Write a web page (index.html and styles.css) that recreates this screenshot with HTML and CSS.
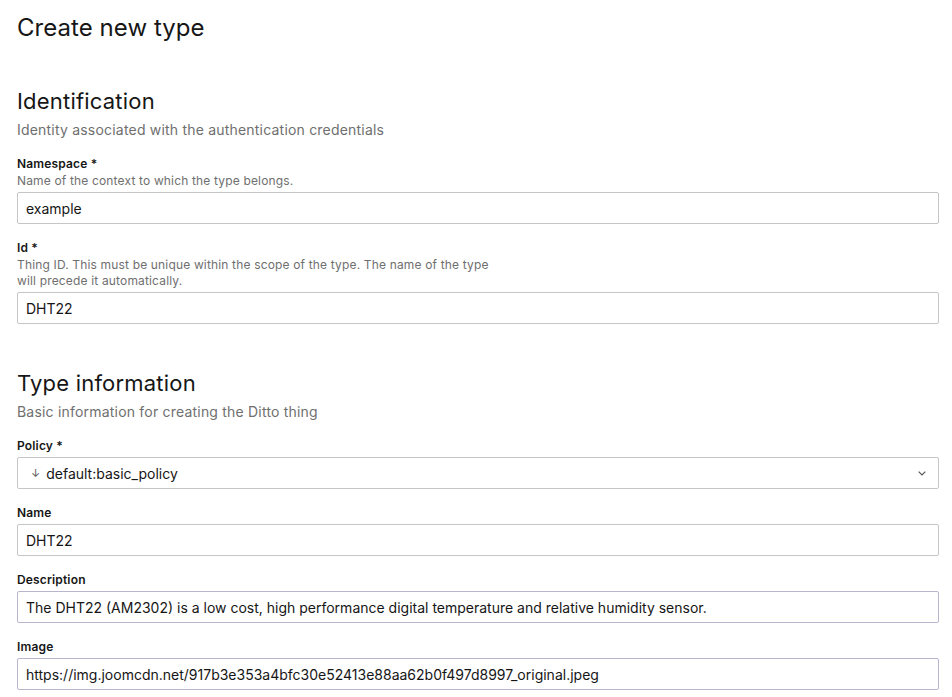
FILE: index.html
```html
<!DOCTYPE html>
<html lang="en">
<head>
<meta charset="utf-8">
<title>Create new type</title>
<link rel="stylesheet" href="styles.css">
</head>
<body>
<main class="page">
  <h1 class="page-title">Create new type</h1>

  <section class="section">
    <h2 class="section-title">Identification</h2>
    <p class="section-desc">Identity associated with the authentication credentials</p>

    <div class="field">
      <label class="label">Namespace *</label>
      <div class="helper">Name of the context to which the type belongs.</div>
      <div class="input">example</div>
    </div>

    <div class="field">
      <label class="label">Id *</label>
      <div class="helper">Thing ID. This must be unique within the scope of the type. The name of the type will precede it automatically.</div>
      <div class="input">DHT22</div>
    </div>
  </section>

  <section class="section">
    <h2 class="section-title">Type information</h2>
    <p class="section-desc">Basic information for creating the Ditto thing</p>

    <div class="field">
      <label class="label">Policy *</label>
      <div class="input select">
        <span class="sel-arrow">↓</span>
        <span class="sel-value">default:basic_policy</span>
        <svg class="chevron" width="8" height="5" viewBox="0 0 8 5"><path d="M0.7 0.7l3.3 3.3 3.3-3.3" fill="none" stroke="#555" stroke-width="1.2"/></svg>
      </div>
    </div>

    <div class="field">
      <label class="label">Name</label>
      <div class="input">DHT22</div>
    </div>

    <div class="field">
      <label class="label">Description</label>
      <div class="input alt">The DHT22 (AM2302) is a low cost, high performance digital temperature and relative humidity sensor.</div>
    </div>

    <div class="field">
      <label class="label">Image</label>
      <div class="input alt">https://img.joomcdn.net/917b3e353a4bfc30e52413e88aa62b0f497d8997_original.jpeg</div>
    </div>
  </section>
</main>
</body>
</html>
```
FILE: styles.css
```css
* { box-sizing: border-box; }
html, body { margin: 0; padding: 0; background: #fff; }
body {
  font-family: Inter, "Noto Sans", sans-serif;
  color: #161616;
}
.page {
  width: 922px;
  margin-left: 17px;
  padding-top: 12px;
}
.page-title {
  margin: 0;
  font-size: 24px;
  font-weight: 400;
  line-height: 32px;
  letter-spacing: 0.05px;
}
.section { margin-top: 43px; }
.section + .section { margin-top: 45px; }
.section-title {
  margin: 0;
  font-size: 22px;
  font-weight: 400;
  line-height: 28px;
  letter-spacing: 0.2px;
}
.section-desc {
  margin: 6px 0 0;
  font-size: 14px;
  line-height: 18px;
  letter-spacing: 0.2px;
  color: #6f6f6f;
}
.field { margin-top: 16px; }
.section-desc + .field { margin-top: 17px; }
.label {
  display: block;
  font-size: 12px;
  font-weight: 600;
  line-height: 16px;
  letter-spacing: 0.16px;
  color: #161616;
}
.helper {
  margin-top: 1px;
  max-width: 480px;
  font-size: 12px;
  line-height: 16px;
  letter-spacing: 0.16px;
  color: #6f6f6f;
}
.input {
  margin-top: 3px;
  height: 32px;
  border: 1px solid #c6c6c6;
  border-radius: 2px;
  padding: 0 9px 0 8px;
  display: flex;
  align-items: center;
  font-size: 14px;
  color: #161616;
  white-space: nowrap;
  overflow: hidden;
}
.input.alt { border-color: #b8b5cf; }
.select { padding-left: 13px; padding-right: 12px; }
.sel-arrow { font-size: 11px; color: #555; margin-right: 6px; }
.sel-value { flex: 1; }
.chevron { display: block; }
```
